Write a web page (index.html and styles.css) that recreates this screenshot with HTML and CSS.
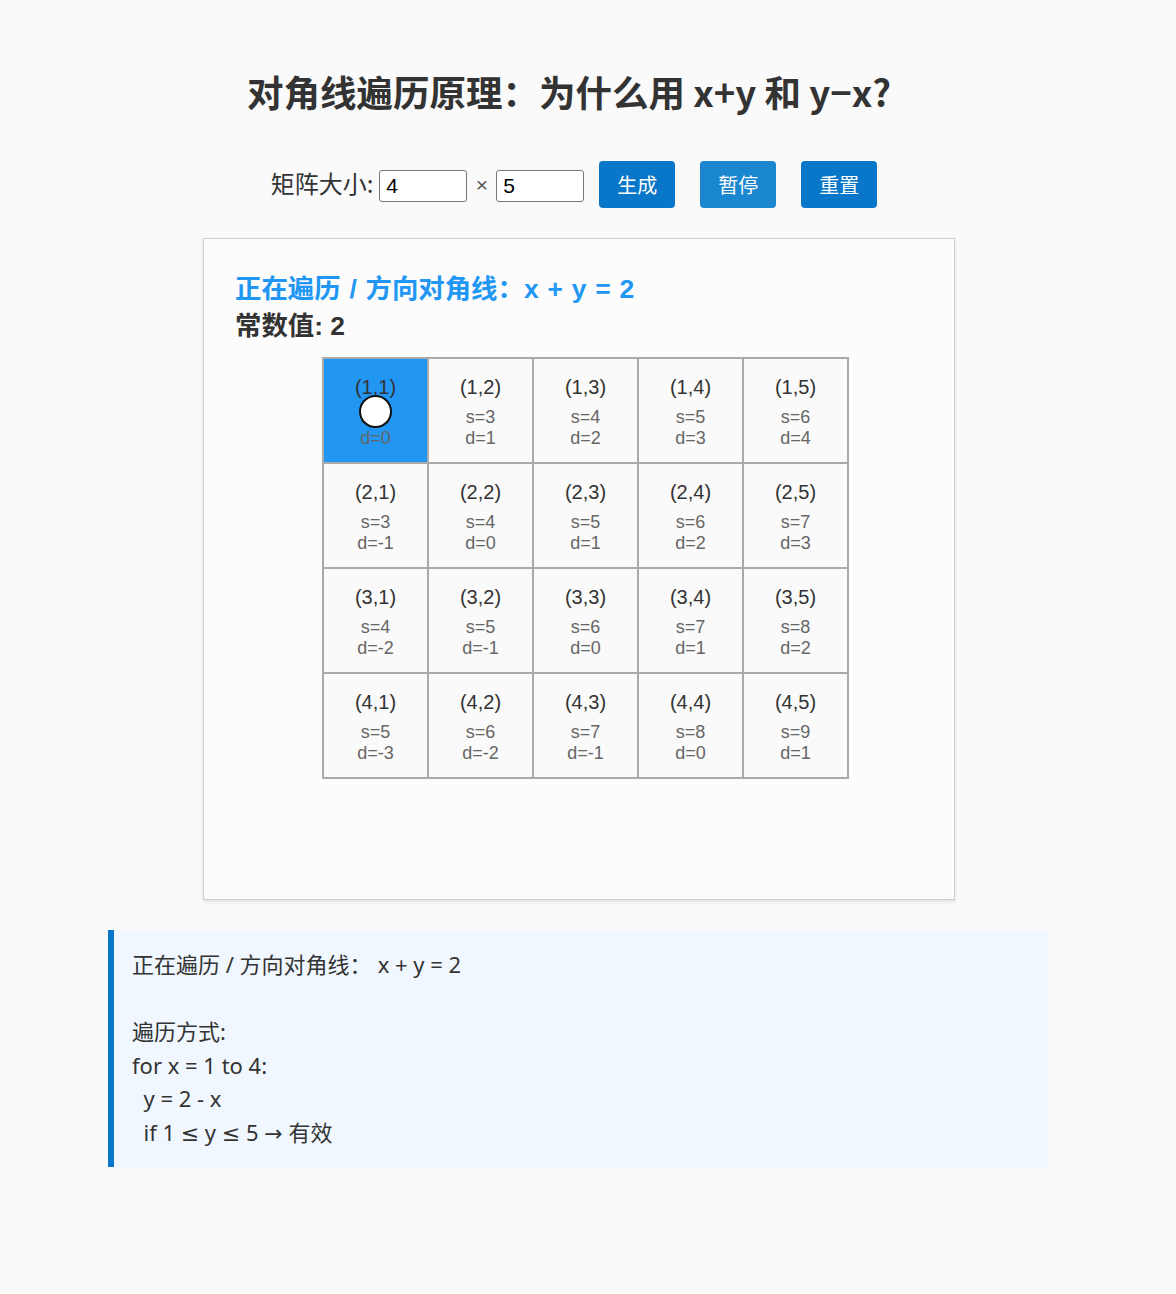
FILE: index.html
```html
<!DOCTYPE html>
<html lang="zh">
<head>
<meta charset="utf-8">
<title>对角线遍历原理</title>
<link rel="stylesheet" href="styles.css">
</head>
<body>
<main class="page">
  <h1 class="title">对角线遍历原理：为什么用 x+y 和 y−x?</h1>

  <div class="controls">
    <label class="size-label">矩阵大小:</label>
    <input class="num" type="text" value="4">
    <span class="times">×</span>
    <input class="num" type="text" value="5">
    <button class="btn">生成</button>
    <button class="btn btn-hover">暂停</button>
    <button class="btn">重置</button>
  </div>

  <section class="canvas">
    <div class="cv-title">正在遍历 / 方向对角线：x + y = 2</div>
    <div class="cv-const">常数值: 2</div>
    <div class="grid">
      <div class="cell active"><div class="coord">(1,1)</div><div class="meta">s=2</div><div class="meta">d=0</div><span class="ball"></span></div>
      <div class="cell"><div class="coord">(1,2)</div><div class="meta">s=3</div><div class="meta">d=1</div></div>
      <div class="cell"><div class="coord">(1,3)</div><div class="meta">s=4</div><div class="meta">d=2</div></div>
      <div class="cell"><div class="coord">(1,4)</div><div class="meta">s=5</div><div class="meta">d=3</div></div>
      <div class="cell"><div class="coord">(1,5)</div><div class="meta">s=6</div><div class="meta">d=4</div></div>

      <div class="cell"><div class="coord">(2,1)</div><div class="meta">s=3</div><div class="meta">d=-1</div></div>
      <div class="cell"><div class="coord">(2,2)</div><div class="meta">s=4</div><div class="meta">d=0</div></div>
      <div class="cell"><div class="coord">(2,3)</div><div class="meta">s=5</div><div class="meta">d=1</div></div>
      <div class="cell"><div class="coord">(2,4)</div><div class="meta">s=6</div><div class="meta">d=2</div></div>
      <div class="cell"><div class="coord">(2,5)</div><div class="meta">s=7</div><div class="meta">d=3</div></div>

      <div class="cell"><div class="coord">(3,1)</div><div class="meta">s=4</div><div class="meta">d=-2</div></div>
      <div class="cell"><div class="coord">(3,2)</div><div class="meta">s=5</div><div class="meta">d=-1</div></div>
      <div class="cell"><div class="coord">(3,3)</div><div class="meta">s=6</div><div class="meta">d=0</div></div>
      <div class="cell"><div class="coord">(3,4)</div><div class="meta">s=7</div><div class="meta">d=1</div></div>
      <div class="cell"><div class="coord">(3,5)</div><div class="meta">s=8</div><div class="meta">d=2</div></div>

      <div class="cell"><div class="coord">(4,1)</div><div class="meta">s=5</div><div class="meta">d=-3</div></div>
      <div class="cell"><div class="coord">(4,2)</div><div class="meta">s=6</div><div class="meta">d=-2</div></div>
      <div class="cell"><div class="coord">(4,3)</div><div class="meta">s=7</div><div class="meta">d=-1</div></div>
      <div class="cell"><div class="coord">(4,4)</div><div class="meta">s=8</div><div class="meta">d=0</div></div>
      <div class="cell"><div class="coord">(4,5)</div><div class="meta">s=9</div><div class="meta">d=1</div></div>
    </div>
  </section>

  <pre class="info">正在遍历 / 方向对角线：<span class="expr">x + y = 2</span>

遍历方式:
for x = 1 to 4:
  y = 2 - x
  if 1 ≤ y ≤ 5 → 有效</pre>
</main>
</body>
</html>
```

FILE: styles.css
```css
html, body {
  margin: 0;
  padding: 0;
  background: #fafafa;
}

body {
  padding-right: 20px;
  color: #333;
  font-family: "Noto Sans", "Noto Sans CJK SC", sans-serif;
}

.page {
  display: flex;
  flex-direction: column;
  align-items: center;
}

.title {
  margin: 70px 18px 0 0;
  font-family: "Noto Sans CJK SC", sans-serif;
  font-weight: 700;
  font-size: 36.5px;
  line-height: 44px;
  color: #333;
}

.controls {
  display: flex;
  align-items: center;
  margin: 47px 8px 0 0;
  height: 47px;
}

.size-label {
  font-family: "Noto Sans CJK SC", sans-serif;
  font-size: 24px;
  line-height: 30px;
  color: #333;
  margin: -3px 6px 0 0;
}

.num {
  box-sizing: border-box;
  width: 88px;
  height: 32px;
  padding: 0 6px;
  margin-top: 2px;
  border: 1px solid #767676;
  border-radius: 3px;
  background: #fff;
  font-family: "Liberation Sans", sans-serif;
  font-size: 21px;
  color: #000;
}

.times {
  font-family: "Liberation Sans", sans-serif;
  font-size: 21px;
  color: #555;
  width: 29px;
  text-align: center;
}

.btn {
  box-sizing: border-box;
  height: 47px;
  width: 76px;
  margin-left: 25px;
  border: none;
  border-radius: 4px;
  background: #0877c9;
  color: #fff;
  font-family: "Noto Sans CJK SC", sans-serif;
  font-size: 20px;
  padding: 0;
}

.controls .num + .btn {
  margin-left: 15px;
}

.btn-hover {
  background: #1a86cf;
}

.canvas {
  box-sizing: border-box;
  width: 752px;
  height: 662px;
  margin: 30px 0 0 2px;
  padding: 32px 31px 0;
  border: 1px solid #ccc;
  background: #fcfcfc;
  box-shadow: 0 2px 4px rgba(0, 0, 0, 0.1);
}

.cv-title,
.cv-const {
  font-family: "Liberation Sans", "Noto Sans CJK SC", sans-serif;
  font-weight: 700;
  font-size: 26.4px;
  line-height: 37px;
}

.cv-title {
  color: #2196f3;
  word-spacing: 1.5px;
}

.cv-const {
  color: #333;
}

.grid {
  display: grid;
  grid-template-columns: repeat(5, 103px);
  grid-template-rows: repeat(4, 103px);
  gap: 2px;
  padding: 2px;
  background: #aaa;
  width: max-content;
  margin: 12px 0 0 87px;
}

.cell {
  position: relative;
  background: #fafafa;
  display: flex;
  flex-direction: column;
  align-items: center;
  padding-top: 16px;
  box-sizing: border-box;
  font-family: "Liberation Sans", sans-serif;
}

.cell.active {
  background: #2196f3;
}

.coord {
  font-size: 20px;
  line-height: 24px;
  color: #333;
  margin-bottom: 8px;
}

.meta {
  font-size: 18px;
  line-height: 21px;
  color: #666;
}

.ball {
  position: absolute;
  left: 50%;
  top: 50%;
  width: 29px;
  height: 29px;
  margin: -16px 0 0 -17px;
  border: 2.5px solid #111;
  border-radius: 50%;
  background: #fff;
}

.info {
  box-sizing: border-box;
  width: 940px;
  margin: 30px 0 0;
  padding: 18px 20px 18px 18px;
  border-left: 6px solid #0877c9;
  background: #f0f7ff;
  font-family: "Noto Sans", "DejaVu Sans", "Noto Sans CJK SC", sans-serif;
  font-size: 22px;
  line-height: 33.5px;
  color: #333;
  white-space: pre-wrap;
}

.info .expr {
  margin-left: 6px;
}
```
